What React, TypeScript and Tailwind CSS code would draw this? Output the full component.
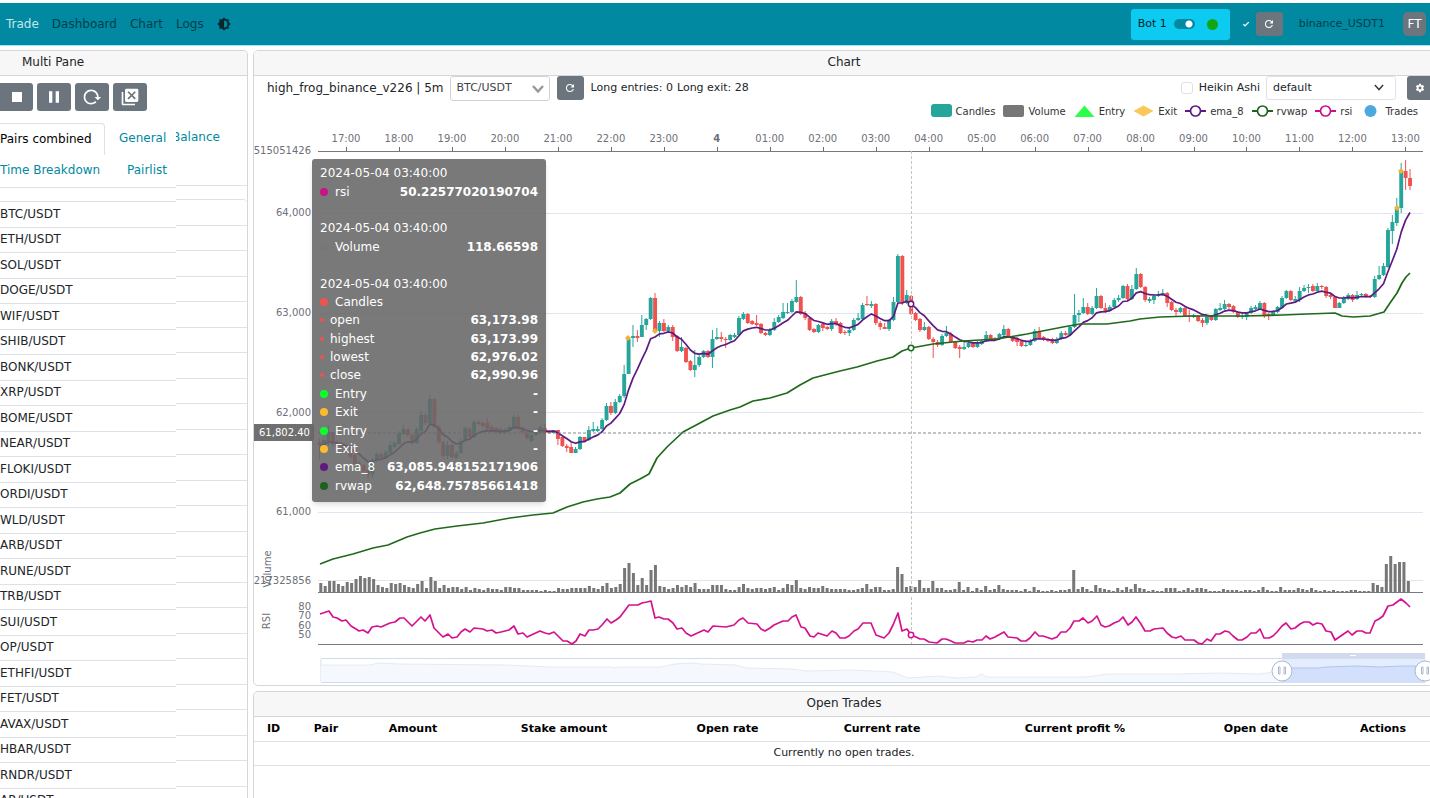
import type { ReactNode } from "react";

const pairs = [
  "BTC", "ETH", "SOL", "DOGE", "WIF", "SHIB", "BONK", "XRP", "BOME", "NEAR", "FLOKI", "ORDI",
  "WLD", "ARB", "RUNE", "TRB", "SUI", "OP", "ETHFI", "FET", "AVAX", "HBAR", "RNDR", "AR",
];

// One entry per 5m candle: open, close, high, low (plot coordinates)
const candleData = `
442 445 438 460|445 440 436 448|441 432 425 446|432 444 432 447|443 446 440 448|444 447 442 449|445 452 444 453|451 457 445 459|
455 464 453 465|466 463 461 468|465 471 464 472|470 475 467 479|474 460 458 478|460 454 452 462|454 458 452 459|458 452 450 459|
453 445 441 454|447 443 441 448|444 433 431 445|434 429 425 435|429 435 429 437|435 443 433 445|443 429 427 444|431 415 411 432|
415 423 413 425|423 399 395 424|399 427 398 428|427 442 425 444|442 456 441 459|456 445 441 459|445 457 444 458|458 453 451 459|
453 441 438 454|441 428 426 442|429 437 427 438|437 422 420 438|422 424 420 425|423 426 421 428|423 429 418 431|427 431 425 432|
428 432 427 434|429 433 428 434|433 430 428 434|431 427 425 432|428 417 414 429|417 429 415 430|429 432 427 433|433 438 431 440|
441 435 433 442|435 430 428 436|433 427 425 434|428 433 424 433|431 433 430 434|433 430 430 433|430 439 430 445|437 446 436 447|
446 448 444 452|447 453 442 453|453 449 447 453|449 437 436 450|437 441 437 442|440 430 426 441|431 429 422 432|431 429 426 432|
429 420 418 430|420 406 403 421|406 413 402 415|413 402 399 414|402 396 394 403|396 374 365 398|374 339 336 374|338 336 325 347|
336 338 330 342|337 325 315 337|325 319 318 330|319 298 297 320|298 331 293 333|331 323 321 337|323 331 319 332|331 327 325 332|
327 337 325 341|336 351 335 352|351 347 337 352|348 362 347 363|361 370 360 371|370 365 350 377|365 357 355 367|357 351 350 358|
351 357 350 358|357 339 330 368|339 337 328 340|337 339 332 342|339 340 337 348|340 335 334 341|337 335 333 338|335 318 316 336|
319 314 312 320|314 323 313 324|321 324 320 325|323 325 315 326|324 333 323 334|333 335 332 336|335 330 328 336|330 322 318 331|
322 317 315 323|318 312 303 319|313 312 303 314|312 301 299 313|302 297 280 303|297 314 296 315|313 318 311 320|318 330 317 331|
329 332 328 333|332 325 324 333|324 328 322 331|327 329 326 330|329 321 319 331|321 324 318 326|323 333 322 334|332 333 330 335|
333 330 328 336|330 320 318 331|320 318 313 321|319 305 303 320|304 305 296 306|306 304 301 308|304 323 303 325|323 327 321 330|
327 329 323 329|329 320 319 331|320 302 297 321|302 256 254 303|256 303 255 305|303 295 290 304|296 314 295 315|313 320 312 321|
319 330 318 332|330 327 322 331|327 339 326 340|339 342 337 358|342 345 340 347|345 336 334 346|336 333 326 337|334 342 332 343|
342 348 341 349|347 349 345 358|349 347 342 350|347 343 341 348|343 347 342 348|347 343 341 348|344 341 340 345|341 335 331 342|
335 339 334 340|338 340 337 341|339 334 333 340|335 329 325 336|329 337 328 338|337 341 336 342|338 342 337 346|341 346 340 347|
346 345 340 347|345 341 339 346|341 331 329 342|332 338 327 339|337 340 336 341|339 341 338 342|339 343 338 344|343 339 337 344|
339 333 331 340|333 335 331 336|335 327 325 336|327 315 294 328|315 313 310 322|313 307 298 314|307 314 303 315|314 308 306 315|
308 296 288 309|296 308 295 309|308 311 303 313|311 307 305 312|307 300 298 308|300 298 295 302|298 286 285 299|286 299 284 300|
299 289 285 300|289 274 268 290|274 287 273 288|287 300 286 302|301 299 297 303|300 296 294 304|296 294 291 297|295 293 289 296|
293 303 292 307|302 310 301 311|310 312 308 316|312 308 307 313|308 316 307 317|315 316 310 322|317 315 314 318|316 321 315 322|
320 323 318 327|323 317 316 325|316 320 315 321|320 309 308 321|310 308 303 311|309 304 300 310|304 307 303 309|306 312 305 313|
312 317 311 318|317 316 313 319|317 313 312 320|313 308 306 314|309 307 305 310|309 303 301 310|303 315 302 318|314 316 313 320|
315 311 310 316|312 307 306 313|308 298 296 309|298 291 290 299|291 300 290 301|301 299 296 302|300 291 287 302|291 288 285 292|
288 287 284 293|286 291 284 292|291 286 283 292|286 287 285 289|287 296 286 298|295 297 294 299|297 308 296 308|308 303 302 308|
303 298 296 304|299 295 293 300|295 300 294 302|299 295 291 300|295 294 293 297|294 297 293 298|296 297 295 298|297 279 276 298|
279 275 266 280|275 266 263 276|267 230 228 268|231 222 215 244|223 209 198 226|208 172 163 213|171 178 160 190|178 186 169 190`;

const candles = candleData
  .split("|")
  .map((row) => row.trim().split(" ").map(Number));

const volumes = [
  9, 6, 11, 11, 8, 6, 10, 9, 13, 16, 14, 15, 13, 7, 5, 4, 9, 8, 9, 7, 5, 4, 8, 11, 4, 15, 11, 4, 7, 4, 5, 5,
  3, 5, 2, 4, 3, 2, 4, 3, 3, 2, 5, 5, 4, 4, 2, 2, 2, 2, 1, 2, 1, 1, 4, 3, 3, 4, 4, 4, 4, 6, 4, 3,
  6, 9, 4, 5, 8, 24, 29, 19, 7, 14, 7, 22, 27, 6, 5, 3, 4, 7, 5, 7, 5, 9, 3, 3, 3, 7, 7, 7, 3, 2, 2, 5,
  8, 4, 3, 4, 4, 3, 4, 5, 2, 4, 8, 7, 12, 4, 3, 5, 4, 4, 6, 4, 3, 3, 3, 3, 2, 2, 3, 4, 8, 3, 5, 5,
  2, 2, 3, 25, 18, 5, 6, 5, 12, 4, 4, 11, 4, 4, 2, 2, 3, 10, 2, 5, 1, 4, 2, 6, 2, 3, 7, 3, 2, 2, 2, 1,
  3, 1, 5, 2, 1, 1, 2, 1, 2, 2, 3, 22, 3, 5, 3, 1, 7, 4, 3, 2, 1, 4, 2, 5, 3, 8, 4, 3, 1, 2, 1, 1,
  4, 4, 4, 1, 2, 4, 2, 4, 4, 3, 1, 1, 1, 3, 2, 2, 2, 1, 2, 2, 1, 2, 5, 2, 1, 1, 5, 2, 2, 2, 4, 3,
  2, 4, 2, 1, 2, 1, 2, 1, 1, 1, 2, 2, 1, 1, 1, 9, 7, 5, 28, 36, 28, 30, 30, 11,
];

const rvwap =
  "320,564 333,559 353,554 373,548 388,545 407,537 420,533 435,529 457,526 483,523 510,518 533,515 553,513 567,507 583,502 597,499 610,497 620,493 630,484 640,479 649,474 652,468 657,458 667,447 683,432 700,423 713,416 730,410 740,407 753,401 770,398 787,393 800,385 813,378 840,371 857,367 877,361 893,357 902,351 911,348 933,344 963,341 997,339 1027,334 1063,327 1080,324 1107,324 1130,321 1140,319 1160,317 1193,316 1243,316 1283,315 1307,314 1335,313 1342,316 1353,317 1370,316 1384,312 1390,303 1397,293 1402,283 1406,277 1410,273";

const rsi =
  "320,614 329,611 333,617 337,618 342,621 346,620 351,626 356,629 359,631 363,630 368,633 372,627 377,626 381,627 390,623 395,622 400,618 404,618 408,622 412,626 421,617 425,621 430,615 434,628 439,633 443,637 448,634 452,638 457,637 461,632 465,629 470,632 474,628 483,629 487,631 492,630 496,633 501,632 509,630 514,626 518,634 523,633 527,637 540,631 545,633 549,634 554,632 563,641 567,641 572,644 576,641 580,634 585,636 589,630 593,630 598,629 602,625 607,619 611,623 616,620 620,617 629,605 638,605 642,603 647,602 651,601 655,618 659,617 664,619 668,619 673,623 677,629 682,628 686,633 691,636 704,630 708,632 713,626 726,627 734,625 739,620 743,618 748,623 757,624 761,629 765,631 770,628 774,625 783,621 788,621 792,617 796,615 801,627 805,628 810,636 814,637 818,633 827,636 832,631 836,633 840,638 845,638 849,636 854,631 858,629 863,623 871,623 876,635 884,638 889,633 893,625 898,613 902,631 907,629 911,635 916,637 920,639 924,639 929,642 937,643 942,639 946,639 951,641 955,643 964,643 968,641 973,642 977,640 982,640 986,636 990,639 995,637 1004,632 1008,637 1017,638 1021,641 1026,641 1030,638 1035,632 1039,636 1043,636 1052,639 1057,637 1061,632 1066,632 1070,628 1074,621 1079,621 1083,618 1088,623 1092,621 1097,616 1101,625 1105,627 1109,626 1114,623 1119,621 1123,617 1128,625 1132,622 1136,617 1141,624 1145,631 1150,631 1154,629 1163,628 1167,633 1172,637 1176,638 1181,636 1185,640 1194,640 1198,643 1202,644 1207,639 1211,641 1216,634 1220,634 1225,631 1229,632 1233,636 1238,640 1242,640 1247,637 1251,633 1256,633 1260,629 1264,638 1269,638 1273,636 1277,632 1282,626 1286,623 1291,629 1295,628 1300,624 1304,622 1309,622 1313,625 1317,623 1322,624 1326,631 1331,632 1335,640 1348,631 1352,635 1357,631 1362,631 1366,633 1370,633 1375,621 1379,619 1383,616 1388,606 1393,605 1397,602 1401,599 1406,603 1410,607";

const overview =
  "321,665 370,665 378,663 400,664 506,665 551,667 611,667 615,668 619,667 660,667 675,664 692,663 701,664 735,665 747,668 792,669 807,671 852,670 893,672 908,678 938,676 957,678 976,677 981,674 987,677 1040,677 1085,677 1108,674 1175,674 1221,673 1258,674 1267,673 1282,670";
const overviewSelected = "1282,670 1288,668 1318,668 1326,667 1356,666 1380,667 1400,666 1425,666";

const hours = [
  "17:00", "18:00", "19:00", "20:00", "21:00", "22:00", "23:00", "4", "01:00", "02:00", "03:00",
  "04:00", "05:00", "06:00", "07:00", "08:00", "09:00", "10:00", "11:00", "12:00", "13:00",
];

const xOf = (i: number) => 319.5 + i * 4.415;

// 8 period EMA over the closes
let emaValue = 446;
const ema8 = candles
  .map(([, close], i) => {
    emaValue += (2 / 9) * (close - emaValue);
    return `${xOf(i).toFixed(1)},${emaValue.toFixed(1)}`;
  })
  .join(" ");

const icons = {
  theme:
    "M12,18V6A6,6 0 0,1 18,12A6,6 0 0,1 12,18M20,15.31L23.31,12L20,8.69V4H15.31L12,0.69L8.69,4H4V8.69L0.69,12L4,15.31V20H8.69L12,23.31L15.31,20H20V15.31Z",
  stop: "M18,18H6V6H18V18Z",
  pause: "M14,19H18V5H14M6,19H10V5H6V19Z",
  reload:
    "M2 12C2 16.97 6.03 21 11 21C13.39 21 15.68 20.06 17.4 18.4L15.9 16.9C14.63 18.25 12.86 19 11 19C4.76 19 1.64 11.46 6.05 7.05C10.46 2.64 18 5.77 18 12H15L19 16H19.1L23 12H20C20 7.03 15.97 3 11 3C6.03 3 2 7.03 2 12Z",
  closeAll:
    "M4 20H18V22H4C2.9 22 2 21.1 2 20V6H4V20M20.22 2H7.78C6.8 2 6 2.8 6 3.78V16.22C6 17.2 6.8 18 7.78 18H20.22C21.2 18 22 17.2 22 16.22V3.78C22 2.8 21.2 2 20.22 2M19 13.6L17.6 15L14 11.4L10.4 15L9 13.6L12.6 10L9 6.4L10.4 5L14 8.6L17.6 5L19 6.4L15.4 10L19 13.6Z",
  refresh:
    "M17.65,6.35C16.2,4.9 14.21,4 12,4A8,8 0 0,0 4,12A8,8 0 0,0 12,20C15.73,20 18.84,17.45 19.73,14H17.65C16.83,16.33 14.61,18 12,18A6,6 0 0,1 6,12A6,6 0 0,1 12,6C13.66,6 15.14,6.69 16.22,7.78L13,11H20V4L17.65,6.35Z",
  cog: "M12,15.5A3.5,3.5 0 0,1 8.5,12A3.5,3.5 0 0,1 12,8.5A3.5,3.5 0 0,1 15.5,12A3.5,3.5 0 0,1 12,15.5M19.43,12.97C19.47,12.65 19.5,12.33 19.5,12C19.5,11.67 19.47,11.34 19.43,11L21.54,9.37C21.73,9.22 21.78,8.95 21.66,8.73L19.66,5.27C19.54,5.05 19.27,4.96 19.05,5.05L16.56,6.05C16.04,5.66 15.5,5.32 14.87,5.07L14.5,2.42C14.46,2.18 14.25,2 14,2H10C9.75,2 9.54,2.18 9.5,2.42L9.13,5.07C8.5,5.32 7.96,5.66 7.44,6.05L4.95,5.05C4.73,4.96 4.46,5.05 4.34,5.27L2.34,8.73C2.21,8.95 2.27,9.22 2.46,9.37L4.57,11C4.53,11.34 4.5,11.67 4.5,12C4.5,12.33 4.53,12.65 4.57,12.97L2.46,14.63C2.27,14.78 2.21,15.05 2.34,15.27L4.34,18.73C4.46,18.95 4.73,19.03 4.95,18.95L7.44,17.94C7.96,18.34 8.5,18.68 9.13,18.93L9.5,21.58C9.54,21.82 9.75,22 10,22H14C14.25,22 14.46,21.82 14.5,21.58L14.87,18.93C15.5,18.67 16.04,18.34 16.56,17.94L19.05,18.95C19.27,19.03 19.54,18.95 19.66,18.73L21.66,15.27C21.78,15.05 21.73,14.78 21.54,14.63L19.43,12.97Z",
  check: "M9,20.42L2.79,14.21L5.62,11.38L9,14.77L18.88,4.88L21.71,7.71L9,20.42Z",
};

function Icon({ path, className }: { path: string; className: string }) {
  return (
    <svg viewBox="0 0 24 24" className={className} fill="currentColor" aria-hidden="true">
      <path d={path} fillRule="evenodd" />
    </svg>
  );
}

function Navbar() {
  return (
    <nav className="mt-[3px] flex h-[43px] shrink-0 items-center border-b border-[#9eeaf2] bg-[#0089a1] pr-1 pl-[6px] text-[#003f4b]">
      <div className="flex items-center gap-[13px] text-[12px]">
        <a href="#trade" className="text-[#c4e5ea]">Trade</a>
        <a href="#dashboard">Dashboard</a>
        <a href="#chart">Chart</a>
        <a href="#logs">Logs</a>
        <button aria-label="Toggle theme" className="text-[#06282e]">
          <Icon path={icons.theme} className="h-[14px] w-[14px]" />
        </button>
      </div>
      <div className="ml-auto flex items-center text-[11px]">
        <div className="flex h-[31px] w-[99px] items-center rounded-[3px] bg-[#0dcaf0] pr-3 pl-[7px] text-[#06222a]">
          <label htmlFor="bot">Bot 1</label>
          <input
            id="bot"
            type="checkbox"
            role="switch"
            defaultChecked
            className="ml-[7px] h-[10px] w-[21px] appearance-none rounded-full bg-[#0089a1] bg-[radial-gradient(circle_at_15px_5px,#fff_3px,transparent_4px)]"
          />
          <span className="ml-auto h-[11px] w-[11px] rounded-full bg-[#12a712]" />
        </div>
        <Icon path={icons.check} className="ml-3 h-2 w-2 text-white" />
        <button aria-label="Reload" className="ml-[6px] flex h-6 w-[27px] items-center justify-center rounded-[3px] bg-[#6c757d] text-white">
          <Icon path={icons.refresh} className="h-3 w-3" />
        </button>
        <span className="ml-4">binance_USDT1</span>
        <button className="ml-[18px] flex h-6 w-[23px] items-center justify-center rounded-[5px] bg-[#6c757d] text-[12px] text-white">FT</button>
      </div>
    </nav>
  );
}

function PanelTitle({ children }: { children: ReactNode }) {
  return (
    <h2 className="flex h-[25px] shrink-0 items-center justify-center border-b border-[#d5d6d7] bg-[#f7f7f7] pb-0.5 text-[12px]">
      {children}
    </h2>
  );
}

function Sidebar() {
  const controls = [
    { label: "Stop", path: icons.stop },
    { label: "Pause", path: icons.pause },
    { label: "Reload config", path: icons.reload },
    { label: "Force exit all", path: icons.closeAll },
  ];
  return (
    <aside className="flex w-[248px] shrink-0 flex-col overflow-hidden rounded-tr-[5px] border-t border-r border-[#d5d6d7] text-[12px]">
      <h2 className="flex h-[25px] shrink-0 items-center border-b border-[#d5d6d7] bg-[#f7f7f7] pb-0.5 pl-[22px]">Multi Pane</h2>
      <div className="flex shrink-0 gap-1 pt-[7px]">
        {controls.map(({ label, path }) => (
          <button
            key={label}
            aria-label={label}
            className="flex h-7 w-[34px] items-center justify-center rounded-[3px] bg-[#6c757d] text-white first:w-[33px] first:rounded-l-none"
          >
            <Icon path={path} className="h-5 w-5" />
          </button>
        ))}
      </div>

      <div className="flex">
        <div className="w-[176px] shrink-0">
          {/* Tabs */}
          <div className="flex h-[77px] flex-wrap content-start border-b border-[#dee2e6] pt-3 text-[#0089a1]">
            <button className="h-8 w-[105px] rounded-tr-[4px] border-t border-r border-[#dee2e6] pb-0.5 text-left text-black">Pairs combined</button>
            <button className="h-8 pb-0.5 pl-[14px]">General</button>
            <button className="h-8 w-[127px] pb-0.5 text-left">Time Breakdown</button>
            <button className="h-8 pb-0.5">Pairlist</button>
          </div>
          <ul className="mt-[13px] border-t border-[#dee2e6]">
            {pairs.map((pair) => (
              <li key={pair} className="flex items-center border-b border-[#dee2e6] pb-0.5 odd:h-[26px] even:h-[25px]">
                {pair}/USDT
              </li>
            ))}
          </ul>
        </div>
        <div className="min-w-0 flex-1">
          <div className="flex h-[75px] items-start overflow-hidden border-b border-[#dee2e6] pt-[10px] text-[#0089a1]">
            <button className="-ml-1 h-8">Balance</button>
          </div>
          <ul className="mt-[13px] rounded-tr-[4px] border-t border-[#dee2e6]">
            {pairs.map((pair) => (
              <li key={pair} className="border-b border-[#dee2e6] odd:h-[26px] even:h-[25px]" />
            ))}
          </ul>
        </div>
      </div>
    </aside>
  );
}

function LineMark({ color }: { color: string }) {
  return (
    <>
      <path d="M0 7H21" stroke={color} strokeWidth="2" />
      <circle cx="10.5" cy="7" r="5" fill="#fff" stroke={color} strokeWidth="1.7" />
    </>
  );
}

function Legend() {
  const items = [
    { name: "Candles", mark: <rect width="21" height="13" rx="3" fill="#26a69a" /> },
    { name: "Volume", mark: <rect y="1" width="21" height="12" rx="2" fill="#777" /> },
    { name: "Entry", mark: <path d="M10.5 1.5L20.5 13H.5Z" fill="#2cff4b" /> },
    { name: "Exit", mark: <path d="M10.5 1.5L20.5 7L10.5 12.5L.5 7Z" fill="#fac858" /> },
    { name: "ema_8", mark: <LineMark color="#5f1a82" /> },
    { name: "rvwap", mark: <LineMark color="#1f6120" /> },
    { name: "rsi", mark: <LineMark color="#cc1188" /> },
    { name: "Trades", mark: <circle cx="10.5" cy="7" r="6" fill="#4da8e0" /> },
  ];
  return (
    <ul className="flex h-[18px] items-center justify-end gap-2 pr-4 text-[10px] text-[#333]">
      {items.map(({ name, mark }) => (
        <li key={name} className="flex items-center gap-1">
          <svg viewBox="0 0 21 14" className="h-[14px] w-[21px]" aria-hidden="true">{mark}</svg>
          {name}
        </li>
      ))}
    </ul>
  );
}

function Chart() {
  return (
    <svg viewBox="254 120 1180 565" className="block w-full" fontSize="10" fill="#6e7079">
      {/* Grid lines */}
      <path d="M318 213.5H1423M318 313.5H1423M318 412.5H1423M318 512.5H1423M318 580.5H1423" stroke="#e0e6f1" />
      <path d="M318 151.5H1423M318 592.5H1423M318 644.5H1423" stroke="#777a7f" />

      {hours.map((hour, i) => (
        <g key={hour}>
          <path d={`M${Math.round(346 + i * 52.97) + 0.5} 147V151`} stroke="#6e7079" />
          <text x={346 + i * 52.97} y="142" textAnchor="middle" fontWeight={hour === "4" ? 700 : 400}>{hour}</text>
        </g>
      ))}
      <g textAnchor="end">
        <text x="311" y="154">515051426</text>
        <text x="311" y="216">64,000</text>
        <text x="311" y="316">63,000</text>
        <text x="311" y="416">62,000</text>
        <text x="311" y="515">61,000</text>
        <text x="311" y="584">217325856</text>
        <text x="311" y="610">80</text>
        <text x="311" y="619">70</text>
        <text x="311" y="629">60</text>
        <text x="311" y="638">50</text>
      </g>
      <g textAnchor="middle">
        <text transform="translate(271 569) rotate(-90)">Volume</text>
        <text transform="translate(270 621) rotate(-90)">RSI</text>
      </g>

      {volumes.map((v, i) => (
        <rect key={i} x={319.3 + i * 4.403} y={592 - v} width="3" height={v} fill="#777" />
      ))}

      {candles.map(([open, close, high, low], i) => {
        const color = close < open ? "#26a69a" : "#ef5350";
        return (
          <g key={i} fill={color}>
            <rect x={xOf(i) - 0.5} y={high} width="1" height={low - high} />
            <rect x={xOf(i) - 1.9} y={Math.min(open, close)} width="3.9" height={Math.abs(close - open)} />
          </g>
        );
      })}

      <g fill="none" strokeWidth="1.7" strokeLinejoin="round">
        <polyline points={ema8} stroke="#5f1a82" />
        <polyline points={rvwap} stroke="#1f6a1a" />
        <polyline points={rsi} stroke="#d41290" />
      </g>

      {/* Exit signals */}
      {[[628, 338], [655, 331], [1397, 208], [1401, 171]].map(([x, y]) => (
        <path key={x} d={`M${x - 3} ${y}l3-3l3 3l-3 3Z`} fill="#f2b233" />
      ))}

      {/* Crosshair */}
      <path d="M318 433H1423" stroke="#888" strokeDasharray="3 2" />
      <path d="M911.5 151V592M911.5 597V644" stroke="#c4c4c4" strokeDasharray="3 2" />
      <g fill="#fff" strokeWidth="1.5">
        <circle cx="911" cy="304" r="2.7" stroke="#5f1a82" />
        <circle cx="911" cy="348" r="2.7" stroke="#1f6a1a" />
        <circle cx="911" cy="635" r="2.7" stroke="#d41290" />
      </g>
      <rect x="252" y="424" width="62" height="17" rx="2" fill="#6f6f6f" />
      <text x="259" y="436" fill="#fff">61,802.40</text>

      {/* Data zoom */}
      <rect x="321" y="658.5" width="1104" height="24" rx="1" fill="#fff" stroke="#d2dbee" />
      <polygon points={`${overview} 1282,682 321,682`} fill="#f5f8fd" />
      <polyline points={overview} fill="none" stroke="#dfe5f0" strokeWidth="0.8" />
      <rect x="1282" y="658" width="143" height="25" fill="#e4edfd" />
      <polygon points={`${overviewSelected} 1425,683 1282,683`} fill="#d2e0fc" />
      <polyline points={overviewSelected} fill="none" stroke="#a3bbea" strokeWidth="0.8" />
      <rect x="1282" y="653" width="143" height="6" fill="#d2dbee" />
      <path d="M1350 655.5H1356" stroke="#fff" />
      {[1282, 1425].map((x) => (
        <g key={x} stroke="#acb8d1">
          <circle cx={x} cy="671" r="10" fill="#fff" />
          <path d={`M${x - 3.5} 667h1.5v7h-1.5ZM${x + 2} 667h1.5v7h-1.5Z`} fill="#fff" />
        </g>
      ))}
    </svg>
  );
}

const tooltipRows = [
  { title: "2024-05-04 03:40:00" },
  { name: "rsi", value: "50.22577020190704", color: "#cc1188" },
  {},
  { title: "2024-05-04 03:40:00" },
  { name: "Volume", value: "118.66598", color: "#777777" },
  {},
  { title: "2024-05-04 03:40:00" },
  { name: "Candles", color: "#ef5350" },
  { name: "open", value: "63,173.98", color: "#ef5350", small: true },
  { name: "highest", value: "63,173.99", color: "#ef5350", small: true },
  { name: "lowest", value: "62,976.02", color: "#ef5350", small: true },
  { name: "close", value: "62,990.96", color: "#ef5350", small: true },
  { name: "Entry", value: "-", color: "#0cff2c" },
  { name: "Exit", value: "-", color: "#fbbb30" },
  { name: "Entry", value: "-", color: "#0cff2c" },
  { name: "Exit", value: "-", color: "#fbbb30" },
  { name: "ema_8", value: "63,085.948152171906", color: "#5f1a82" },
  { name: "rvwap", value: "62,648.75785661418", color: "#1f6120" },
];

function ChartTooltip() {
  return (
    <div className="absolute top-[39px] left-[58px] grid h-[343px] w-[234px] auto-rows-fr rounded-[3px] bg-[#676767]/88 px-2 pt-[5px] pb-[7px] text-[12px] text-white shadow-md">
      {tooltipRows.map((row, i) => (
        <div key={i} className="flex min-h-0 items-center leading-none">
          {row.title}
          {row.name && (
            <>
              <span
                className={row.small ? "mr-[6px] h-1 w-1 rounded-full" : "mr-[7px] h-2 w-2 rounded-full"}
                style={{ backgroundColor: row.color }}
              />
              {row.name}
              <b className="ml-auto">{row.value}</b>
            </>
          )}
        </div>
      ))}
    </div>
  );
}

function ChartPanel() {
  return (
    <section className="overflow-hidden rounded-[5px] border border-[#d5d6d7]">
      <PanelTitle>Chart</PanelTitle>
      <div className="flex h-[26px] items-start pl-[13px] text-[11px]">
        <span className="leading-6 text-[12px]">high_frog_binance_v226 | 5m</span>
        <div className="relative ml-[6px]">
          <select aria-label="Pair" className="h-[25px] w-[100px] appearance-none rounded-[3px] border border-[#ced4da] bg-white pl-[6px] text-[#444]">
            <option>BTC/USDT</option>
          </select>
          <svg viewBox="0 0 12 8" className="pointer-events-none absolute top-[9px] right-[6px] h-2 w-3" fill="none" stroke="#999" strokeWidth="2.4">
            <path d="M1 1L6 6.5L11 1" />
          </svg>
        </div>
        <button aria-label="Refresh" className="ml-[7px] flex h-6 w-[27px] items-center justify-center rounded-[3px] bg-[#6c757d] text-white">
          <Icon path={icons.refresh} className="h-3 w-3" />
        </button>
        <span className="ml-[7px] leading-6">Long entries: 0</span>
        <span className="ml-1 leading-6">Long exit: 28</span>
        <label className="ml-auto flex h-6 items-center gap-[6px]">
          <input type="checkbox" className="h-3 w-3 appearance-none rounded-[3px] border border-[#dee2e6] bg-white" />
          Heikin Ashi
        </label>
        <div className="relative ml-[6px]">
          <select aria-label="Plot config" className="h-6 w-[130px] appearance-none rounded-[3px] border border-[#dee2e6] bg-white pl-[6px]">
            <option>default</option>
          </select>
          <svg viewBox="0 0 12 8" className="pointer-events-none absolute top-2 right-3 h-[7px] w-[10px]" fill="none" stroke="#343a40" strokeWidth="1.7">
            <path d="M1 1L6 6.5L11 1" />
          </svg>
        </div>
        <button aria-label="Plot settings" className="ml-[11px] flex h-6 w-[27px] items-center rounded-[3px] bg-[#6c757d] pl-2 text-white">
          <Icon path={icons.cog} className="h-[10px] w-[10px]" />
        </button>
      </div>
      <Legend />
      <div className="relative">
        <Chart />
        <ChartTooltip />
      </div>
    </section>
  );
}

function OpenTrades() {
  return (
    <section className="mt-[5px] flex-1 overflow-hidden rounded-t-[5px] border border-b-0 border-[#d5d6d7]">
      <PanelTitle>Open Trades</PanelTitle>
      <table className="w-full table-fixed text-center text-[11px]">
        <thead className="text-black">
          <tr className="h-6 border-b border-[#dee2e6]">
            <th className="w-[39px]">ID</th>
            <th className="w-[66px]">Pair</th>
            <th className="w-[108px]">Amount</th>
            <th className="w-[194px]">Stake amount</th>
            <th className="w-[133px]">Open rate</th>
            <th className="w-[176px]">Current rate</th>
            <th className="w-[210px]">Current profit %</th>
            <th className="w-[152px]">Open date</th>
            <th>Actions</th>
          </tr>
        </thead>
        <tbody>
          <tr className="h-6 border-b border-[#dee2e6]">
            <td colSpan={9}>Currently no open trades.</td>
          </tr>
        </tbody>
      </table>
    </section>
  );
}

export default function App() {
  return (
    <div className="flex h-screen flex-col overflow-hidden bg-white font-['DejaVu_Sans',sans-serif] text-[#212529]">
      <Navbar />
      <div className="mt-1 flex min-h-0 flex-1 gap-[5px]">
        <Sidebar />
        <main className="-mr-[5px] flex min-w-0 flex-1 flex-col">
          <ChartPanel />
          <OpenTrades />
        </main>
      </div>
    </div>
  );
}
